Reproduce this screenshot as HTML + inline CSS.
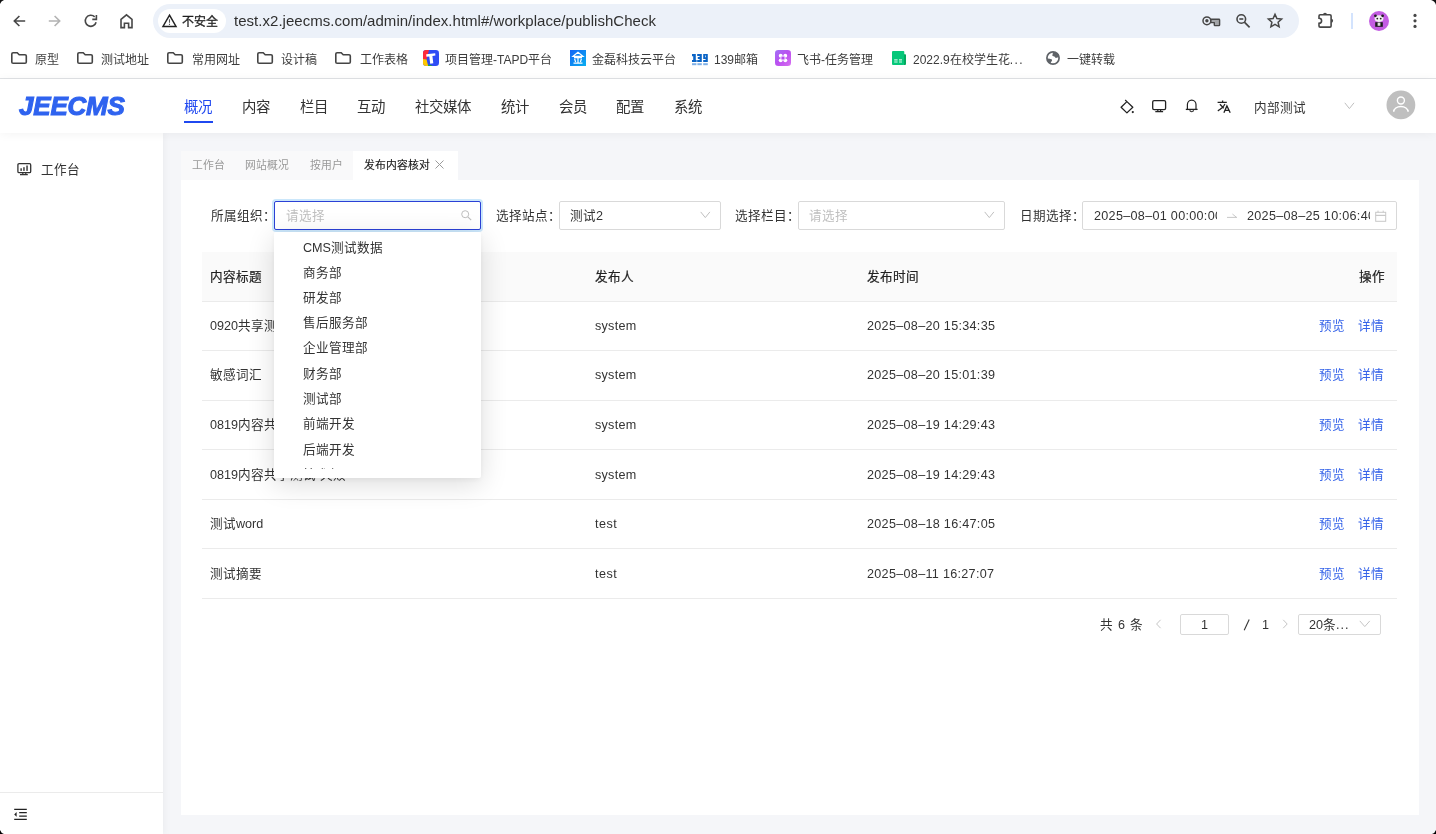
<!DOCTYPE html>
<html lang="zh-CN">
<head>
<meta charset="utf-8">
<style>
*{box-sizing:border-box;margin:0;padding:0}
html,body{width:1436px;height:834px;overflow:hidden;background:#fff;font-family:"Liberation Sans",sans-serif;color:#333}
.a{position:absolute;white-space:nowrap}
div{white-space:nowrap}
svg{position:absolute;overflow:visible}
#chrome{position:absolute;left:0;top:0;width:1436px;height:79px;background:#fff;border-bottom:1px solid #e1e3e6}
#pill{position:absolute;left:153px;top:4px;width:1146px;height:34px;border-radius:17px;background:#ecf1f9}
#chip{position:absolute;left:158px;top:9px;width:68px;height:24px;border-radius:12px;background:#fff}
.bm{position:absolute;top:50.5px;font-size:12px;line-height:18px;color:#3c3c3c}
#hdr{position:absolute;left:0;top:79px;width:1436px;height:54px;background:#fff;box-shadow:0 1px 10px rgba(0,0,0,0.05);z-index:3}
.nav{position:absolute;top:97px;font-size:14.4px;line-height:20px;color:#333;z-index:4}
#side{position:absolute;left:0;top:133px;width:163px;height:701px;background:#fff;z-index:2;box-shadow:1px 0 8px rgba(0,0,0,0.05)}
#main{position:absolute;left:163px;top:133px;width:1273px;height:701px;background:#f5f6f9}
.tab{position:absolute;top:151px;height:29px;font-size:10.8px;line-height:29px;color:#999}
#card{position:absolute;left:181px;top:180px;width:1238px;height:635px;background:#fff}
.lbl{position:absolute;top:208px;font-size:12.6px;line-height:16px;color:#333}
.sel{position:absolute;top:201px;height:29px;border:1px solid #d9d9d9;border-radius:2px;background:#fff}
.ph{color:#bfbfbf}
.th{position:absolute;top:268.5px;font-size:12.6px;line-height:16px;color:#222;-webkit-text-stroke:0.2px #222}
.td{position:absolute;font-size:12.6px;line-height:16px;color:#333}
.dt{letter-spacing:0.3px}
.rl{position:absolute;left:202px;width:1195px;height:1px;background:#ebebeb}
.lnk{position:absolute;font-size:12.6px;line-height:16px;color:#3563e9}
#dd{position:absolute;left:274px;top:232px;width:207px;height:246px;background:#fff;border-radius:2px;box-shadow:0 6px 28px rgba(0,0,0,0.14),0 2px 6px rgba(0,0,0,0.05);z-index:5;overflow:hidden}
.it{position:absolute;left:29px;font-size:12.6px;line-height:16px;color:#333}
body>div,body>svg{will-change:transform}
</style>
</head>
<body>
<!-- browser chrome -->
<div id="chrome">
  <svg style="left:0;top:0" width="6" height="6"><path d="M0 0H4Q1 1 0 4Z" fill="#111"/></svg>
  <svg style="left:1430px;top:0" width="6" height="6"><path d="M6 0H1Q5 1 6 5Z" fill="#111"/></svg>
  <!-- back -->
  <svg style="left:13px;top:15px" width="13" height="12"><path d="M12.2 6H1.6M6.4 1L1.3 6L6.4 11" fill="none" stroke="#474747" stroke-width="1.6"/></svg>
  <svg style="left:48px;top:15px" width="13" height="12"><path d="M0.8 6H11.4M6.6 1L11.7 6L6.6 11" fill="none" stroke="#b3b3b3" stroke-width="1.6"/></svg>
  <!-- reload -->
  <svg style="left:84px;top:14px" width="14" height="14"><path d="M10.69 2.91A5.5 5.5 0 1 0 12.11 8.22" fill="none" stroke="#474747" stroke-width="1.6"/><path d="M8.3 5.4H12.4V1.1" fill="none" stroke="#474747" stroke-width="1.6"/></svg>
  <!-- home -->
  <svg style="left:120px;top:14px" width="14" height="15"><path d="M1 13.6V5.4L6.5 0.9L12 5.4V13.6H8.6V9.2H4.4V13.6Z" fill="none" stroke="#474747" stroke-width="1.6" stroke-linejoin="miter"/></svg>
  <div id="pill"></div>
  <div id="chip"></div>
  <svg style="left:162px;top:14px" width="16" height="14"><path d="M7.5 1.2L14 12.5H1Z" fill="none" stroke="#222" stroke-width="1.5" stroke-linejoin="miter"/><path d="M7.5 5.2V8.8M7.5 9.8V11" stroke="#555" stroke-width="1.1"/></svg>
  <div class="a" style="left:182px;top:13px;font-size:12px;line-height:18px;color:#1f1f1f;-webkit-text-stroke:0.3px #1f1f1f">不安全</div>
  <div class="a" style="left:234px;top:11px;font-size:15px;line-height:20px;color:#303030;letter-spacing:0.03px">test.x2.jeecms.com/admin/index.html#/workplace/publishCheck</div>
  <!-- key -->
  <svg style="left:1202px;top:16px" width="19" height="11"><path d="M8.6 3.3H16.9Q17.6 3.3 17.6 4V8.9Q17.6 9.6 16.9 9.6H13Q12.3 9.6 12.3 8.9V6.6H8.6Z" fill="#a3a5a8" stroke="#474747" stroke-width="1.4" stroke-linejoin="round"/><circle cx="4.9" cy="4.8" r="3.9" fill="#ecf1f9" stroke="#474747" stroke-width="1.5"/><circle cx="4.9" cy="4.8" r="1.7" fill="#474747"/></svg>
  <!-- zoom -->
  <svg style="left:1236px;top:14px" width="15" height="15"><circle cx="5.3" cy="5" r="4.3" fill="none" stroke="#474747" stroke-width="1.6"/><path d="M3.3 5H7.3" stroke="#474747" stroke-width="1.6"/><path d="M8.4 8.1L13.6 13.4" stroke="#474747" stroke-width="1.7"/></svg>
  <!-- star -->
  <svg style="left:1267px;top:13px" width="16" height="16"><path d="M8 1.3L9.9 5.6L14.6 6.1L11.1 9.2L12.1 13.8L8 11.4L3.9 13.8L4.9 9.2L1.4 6.1L6.1 5.6Z" fill="none" stroke="#474747" stroke-width="1.5" stroke-linejoin="miter"/></svg>
  <!-- puzzle -->
  <svg style="left:1317px;top:11px" width="18" height="18"><path d="M3.2 3.8H12.9Q14.1 3.8 14.1 5V14.9Q14.1 16.1 12.9 16.1H3.2Q2 16.1 2 14.9V12.4A2.6 2.6 0 0 0 2 7.2V5Q2 3.8 3.2 3.8Z" fill="none" stroke="#474747" stroke-width="1.6"/><path d="M6 3.8A2 2 0 0 1 10 3.8Z" fill="#474747"/><path d="M14.1 7.8A2 2 0 0 1 14.1 11.8Z" fill="#474747"/></svg>
  <div class="a" style="left:1351px;top:13px;width:2px;height:16px;background:#d3e3fd"></div>
  <!-- profile -->
  <svg style="left:1369px;top:11px" width="20" height="20"><circle cx="10" cy="10" r="10" fill="#c35de2"/><ellipse cx="10" cy="7.6" rx="4.4" ry="3.3" fill="#f2f2f2"/><circle cx="6.4" cy="4.8" r="1.4" fill="#222"/><circle cx="13.6" cy="4.8" r="1.4" fill="#222"/><circle cx="8.3" cy="7.6" r="0.9" fill="#222"/><circle cx="11.7" cy="7.6" r="0.9" fill="#222"/><path d="M6.2 11.2H13.8V15.8H6.2Z" fill="#1a1a1a"/><path d="M8.6 11.6H11.4V14.8H8.6Z" fill="#ddd"/></svg>
  <!-- menu -->
  <svg style="left:1413px;top:13px" width="4" height="16"><circle cx="2" cy="2.4" r="1.6" fill="#474747"/><circle cx="2" cy="7.8" r="1.6" fill="#474747"/><circle cx="2" cy="13.4" r="1.6" fill="#474747"/></svg>

  <!-- bookmarks -->
  <svg style="left:11px;top:52px" width="17" height="12"><path d="M0.8 2.1Q0.8 0.8 2.1 0.8H6.2L8.2 2.8H14Q15.3 2.8 15.3 4.1V9.9Q15.3 11.2 14 11.2H2.1Q0.8 11.2 0.8 9.9Z" fill="none" stroke="#444" stroke-width="1.6"/></svg>
  <div class="bm" style="left:35px">原型</div>
  <svg style="left:77px;top:52px" width="17" height="12"><path d="M0.8 2.1Q0.8 0.8 2.1 0.8H6.2L8.2 2.8H14Q15.3 2.8 15.3 4.1V9.9Q15.3 11.2 14 11.2H2.1Q0.8 11.2 0.8 9.9Z" fill="none" stroke="#444" stroke-width="1.6"/></svg>
  <div class="bm" style="left:101px">测试地址</div>
  <svg style="left:167px;top:52px" width="17" height="12"><path d="M0.8 2.1Q0.8 0.8 2.1 0.8H6.2L8.2 2.8H14Q15.3 2.8 15.3 4.1V9.9Q15.3 11.2 14 11.2H2.1Q0.8 11.2 0.8 9.9Z" fill="none" stroke="#444" stroke-width="1.6"/></svg>
  <div class="bm" style="left:192px">常用网址</div>
  <svg style="left:257px;top:52px" width="17" height="12"><path d="M0.8 2.1Q0.8 0.8 2.1 0.8H6.2L8.2 2.8H14Q15.3 2.8 15.3 4.1V9.9Q15.3 11.2 14 11.2H2.1Q0.8 11.2 0.8 9.9Z" fill="none" stroke="#444" stroke-width="1.6"/></svg>
  <div class="bm" style="left:281px">设计稿</div>
  <svg style="left:335px;top:52px" width="17" height="12"><path d="M0.8 2.1Q0.8 0.8 2.1 0.8H6.2L8.2 2.8H14Q15.3 2.8 15.3 4.1V9.9Q15.3 11.2 14 11.2H2.1Q0.8 11.2 0.8 9.9Z" fill="none" stroke="#444" stroke-width="1.6"/></svg>
  <div class="bm" style="left:360px">工作表格</div>
  <svg style="left:423px;top:50px" width="16" height="16"><defs><clipPath id="tp"><rect x="0" y="0" width="16" height="16" rx="3.2"/></clipPath></defs><g clip-path="url(#tp)"><rect width="16" height="16" fill="#2f4df5"/><path d="M0 0H6L3.6 9.6L0 9Z" fill="#ff2a3a"/><path d="M0 9L3.6 9.6L5.2 16H0Z" fill="#ffc800"/><path d="M5 16L5.2 14.6L9 15.6V16Z" fill="#1eaa3c"/></g><path d="M3.2 4.2L12.2 3.2L12.4 5.6L9.4 6L10.3 13.3L7.2 13.8L6.3 6.4L3.4 6.8Z" fill="#fff"/></svg>
  <div class="bm" style="left:445px">项目管理-TAPD平台</div>
  <svg style="left:570px;top:50px" width="16" height="16"><defs><linearGradient id="jg" x1="0" y1="0" x2="1" y2="1"><stop offset="0" stop-color="#1565f5"/><stop offset="1" stop-color="#07aef0"/></linearGradient></defs><rect width="16" height="16" fill="url(#jg)"/><path d="M8 2.3L3 6.3H13Z" fill="none" stroke="#fff" stroke-width="1.2"/><path d="M4 7.6H12M8 6.4V13M4.6 8.8L5.6 12M11.4 8.8L10.4 12M3.5 13.2H12.5" stroke="#fff" stroke-width="1.2" fill="none"/></svg>
  <div class="bm" style="left:592px">金磊科技云平台</div>
  <svg style="left:691.5px;top:53.8px" width="17" height="13"><g fill="#0a64c6"><path d="M0 0H3.8V6H4.6V8H0V6H1.2V2.2H0Z"/><path d="M5.2 0H9.8V8H5.2V6H7.6V5H5.8V3H7.6V2H5.2Z"/><path d="M11.2 0H15.8V8H11.2V6H13.6V5H11.2ZM13.2 1.6V3.2H13.9V1.6Z"/></g><g fill="#7fb0e6"><rect x="0" y="9.2" width="4.4" height="2"/><rect x="5.4" y="9.2" width="4.4" height="2"/><rect x="11.2" y="9.2" width="4.6" height="2"/></g></svg>
  <div class="bm" style="left:714px">139邮箱</div>
  <svg style="left:775px;top:50px" width="16" height="16"><defs><linearGradient id="fg" x1="0" y1="0" x2="1" y2="1"><stop offset="0" stop-color="#a070f6"/><stop offset="0.5" stop-color="#bb4ff0"/><stop offset="1" stop-color="#d870f0"/></linearGradient></defs><rect width="16" height="16" rx="3.3" fill="url(#fg)"/><circle cx="5.7" cy="5.7" r="1.9" fill="#fff"/><circle cx="10.3" cy="5.7" r="1.9" fill="#fff"/><circle cx="5.7" cy="10.3" r="1.9" fill="#fff"/><circle cx="10.3" cy="10.3" r="1.9" fill="#fff"/><circle cx="8" cy="8" r="2.6" fill="#e9c8fb"/><circle cx="8" cy="8" r="1.6" fill="#b54cf0"/></svg>
  <div class="bm" style="left:797px">飞书-任务管理</div>
  <svg style="left:892px;top:51px" width="15" height="15"><rect x="0" y="0" width="12.3" height="14" rx="1" fill="#06c77a"/><path d="M12 3.2H13.2Q14 3.2 14 4V13Q14 14 13 14H12Z" fill="#03a95f"/><rect x="2.2" y="8.4" width="3.4" height="1" fill="#fff"/><rect x="7" y="8.4" width="3" height="1" fill="#fff"/><rect x="2.2" y="10.5" width="3.4" height="1" fill="#cfffe8"/><rect x="7" y="10.5" width="3" height="1" fill="#cfffe8"/></svg>
  <div class="bm" style="left:913px">2022.9在校学生花<span style="letter-spacing:1.4px">...</span></div>
  <svg style="left:1046px;top:51px" width="14" height="14"><circle cx="7" cy="7" r="6.1" fill="none" stroke="#5f6368" stroke-width="1.7"/><path d="M7.2 0.9Q6.2 3.5 6.4 4.9Q8.4 4.7 9.8 7.1Q11.5 6.5 13.1 6.1L13 4Q11.5 1.5 7.2 0.9Z" fill="#5f6368"/><path d="M0.9 7.5Q3.5 7.4 6 8.4Q6.4 10.2 5 11.1Q4.6 12.2 4.6 13Q1.8 11.5 0.9 7.5Z" fill="#5f6368"/></svg>
  <div class="bm" style="left:1067px">一键转载</div>
</div>
<!-- app header -->
<div id="hdr">
  <div class="a" style="left:19px;top:12px;font-size:26px;line-height:30px;font-weight:bold;font-style:italic;color:#2f63ef;-webkit-text-stroke:1.1px #2f63ef;letter-spacing:-0.2px">JEECMS</div>
</div>
<div class="nav" style="left:184px;color:#1f48f0">概况</div>
<div class="a" style="left:184px;top:121px;width:29px;height:2px;background:#1f48f0;z-index:4"></div>
<div class="nav" style="left:242px">内容</div>
<div class="nav" style="left:300px">栏目</div>
<div class="nav" style="left:357px">互动</div>
<div class="nav" style="left:415px">社交媒体</div>
<div class="nav" style="left:501px">统计</div>
<div class="nav" style="left:559px">会员</div>
<div class="nav" style="left:616px">配置</div>
<div class="nav" style="left:674px">系统</div>
<!-- header right icons -->
<svg style="left:1120px;top:98.5px;z-index:4" width="15" height="15"><path d="M1.1 8.3L6.9 2.6L12.8 8.3L6.9 13.9Z" fill="none" stroke="#222" stroke-width="1.3" stroke-linejoin="round"/><path d="M5.2 1L6.9 2.6" stroke="#222" stroke-width="1.3"/><circle cx="12.8" cy="13.1" r="1.1" fill="#222"/></svg>
<svg style="left:1152px;top:100px;z-index:4" width="15" height="13"><rect x="0.7" y="0.6" width="12.9" height="9" rx="1.4" fill="none" stroke="#222" stroke-width="1.3"/><path d="M5.8 9.6V11.4M8.6 9.6V11.4M3.3 11.7H11.1" stroke="#222" stroke-width="1.2"/></svg>
<svg style="left:1185px;top:99px;z-index:4" width="15" height="15"><path d="M2.4 10.4V5.6A4.3 4.5 0 0 1 11 5.6V10.4" fill="none" stroke="#222" stroke-width="1.2"/><path d="M0.8 10.4H12.6" stroke="#222" stroke-width="1.3"/><path d="M4.9 10.9A1.8 1.8 0 0 0 8.5 10.9" fill="none" stroke="#444" stroke-width="1.2"/></svg>
<svg style="left:1217px;top:99.5px;z-index:4" width="15" height="14"><path d="M0.6 2.3H9.8M5.6 0.5V2.3M2.9 4.3L6.8 8.3M7.9 4.1Q6 8.3 0.8 10.8" fill="none" stroke="#222" stroke-width="1.3"/><path d="M6.9 12.8L9.9 5.9L13.2 12.8M7.9 10.4H12.1" fill="none" stroke="#222" stroke-width="1.3"/></svg>
<div class="a" style="left:1254px;top:99.5px;font-size:12.6px;line-height:16px;color:#333;z-index:4">内部测试</div>
<svg style="left:1344px;top:102px;z-index:4" width="11" height="8"><path d="M0.8 0.8L5.4 6.6L10 0.8" fill="none" stroke="#bfbfbf" stroke-width="1"/></svg>
<svg style="left:1386px;top:90px;z-index:4" width="30" height="30"><circle cx="14.9" cy="14.9" r="14.4" fill="#bfbfbf"/><circle cx="14.9" cy="10.5" r="3.5" fill="none" stroke="#fff" stroke-width="1.4"/><path d="M7.7 21.8A7.2 5.4 0 0 1 22.1 21.8" fill="none" stroke="#fff" stroke-width="1.5"/></svg>

<!-- sidebar -->
<div id="side">
  <svg style="left:17px;top:30px" width="15" height="14"><rect x="0.9" y="0.7" width="12.8" height="9" rx="1.2" fill="none" stroke="#333" stroke-width="1.3"/><rect x="3.3" y="5.3" width="1.7" height="2.6" fill="#555"/><rect x="6.1" y="4.2" width="1.7" height="3.7" fill="#555"/><rect x="9.2" y="2.5" width="1.7" height="5.4" fill="#555"/><path d="M5.8 9.7V11.4M8.8 9.7V11.4M3 11.6H10.8" stroke="#333" stroke-width="1.2"/></svg>
  <div class="a" style="left:41px;top:29px;font-size:12.6px;line-height:16px;color:#333">工作台</div>
  <div class="a" style="left:0;top:659px;width:163px;height:1px;background:#ebebeb"></div>
  <svg style="left:14px;top:675px" width="14" height="13"><path d="M0.2 1.4H12.8M5.2 4.6H12.8M5.2 8.1H12.8M0.2 11.4H12.8" stroke="#222" stroke-width="1.3"/><path d="M0.2 6.4L2.6 4V8.8Z" fill="#222"/></svg>
</div>
<!-- main -->
<div id="main"></div>
<div class="a" style="left:181px;top:151px;width:172px;height:29px;background:#f9f9fa"></div>
<div class="a" style="left:353px;top:151px;width:105px;height:29px;background:#fff"></div>
<div class="tab" style="left:192px">工作台</div>
<div class="tab" style="left:245px">网站概况</div>
<div class="tab" style="left:310px">按用户</div>
<div class="tab" style="left:364px;color:#1a1a1a;-webkit-text-stroke:0.15px #1a1a1a">发布内容核对</div>
<svg style="left:435px;top:160px" width="9" height="9"><path d="M0.5 0.5L8.5 8.5M8.5 0.5L0.5 8.5" stroke="#9a9a9a" stroke-width="1"/></svg>
<div id="card"></div>

<!-- filters -->
<div class="lbl" style="left:211px">所属组织：</div>
<div class="sel" style="left:274px;width:207px;border-color:#2b41d6;box-shadow:0 0 0 2px #cbe7fb"></div>
<div class="lbl ph" style="left:285.5px">请选择</div>
<svg style="left:461px;top:210px" width="11" height="11"><circle cx="4.2" cy="4.2" r="3.5" fill="none" stroke="#bdbdbd" stroke-width="1"/><path d="M6.8 6.8L10.2 10.2" stroke="#bdbdbd" stroke-width="1.1"/></svg>
<div class="lbl" style="left:496px">选择站点：</div>
<div class="sel" style="left:559px;width:162px"></div>
<div class="lbl" style="left:570px">测试2</div>
<svg style="left:700px;top:211px" width="11" height="8"><path d="M0.7 0.9L5.3 6.6L9.9 0.9" fill="none" stroke="#bfbfbf" stroke-width="1"/></svg>
<div class="lbl" style="left:735px">选择栏目：</div>
<div class="sel" style="left:798px;width:207px"></div>
<div class="lbl ph" style="left:809px">请选择</div>
<svg style="left:984px;top:211px" width="11" height="8"><path d="M0.7 0.9L5.3 6.6L9.9 0.9" fill="none" stroke="#bfbfbf" stroke-width="1"/></svg>
<div class="lbl" style="left:1020px">日期选择：</div>
<div class="sel" style="left:1082px;width:315px"></div>
<div class="lbl dt" style="left:1094px;width:123px;overflow:hidden">2025–08–01 00:00:00</div>
<svg style="left:1226px;top:213px" width="12" height="6"><path d="M1 4.4H11M6.4 1L10.6 4.4" fill="none" stroke="#c8c8c8" stroke-width="1"/></svg>
<div class="lbl dt" style="left:1247px;width:123px;overflow:hidden">2025–08–25 10:06:40</div>
<svg style="left:1375px;top:210px" width="12" height="12"><rect x="0.7" y="2.3" width="10" height="9" fill="none" stroke="#c8c8c8" stroke-width="1"/><path d="M0.7 5.4H10.7" stroke="#c8c8c8" stroke-width="1.2"/><path d="M3 0.6V2.4M8.2 0.6V2.4" stroke="#c8c8c8" stroke-width="1"/></svg>

<!-- table -->
<div class="a" style="left:202px;top:252px;width:1195px;height:49px;background:#fafafa"></div>
<div class="rl" style="top:301px"></div>
<div class="rl" style="top:350px"></div>
<div class="rl" style="top:400px"></div>
<div class="rl" style="top:449px"></div>
<div class="rl" style="top:499px"></div>
<div class="rl" style="top:548px"></div>
<div class="rl" style="top:598px"></div>
<div class="th" style="left:210px">内容标题</div>
<div class="th" style="left:595px">发布人</div>
<div class="th" style="left:867px">发布时间</div>
<div class="th" style="left:1359px">操作</div>

<div class="td" style="left:210px;top:318px">0920共享测试</div>
<div class="td" style="left:595px;top:318px;letter-spacing:0.25px">system</div>
<div class="td dt" style="left:867px;top:318px">2025–08–20 15:34:35</div>
<div class="lnk" style="left:1319px;top:318px">预览</div>
<div class="lnk" style="left:1358px;top:318px">详情</div>

<div class="td" style="left:210px;top:367px">敏感词汇</div>
<div class="td" style="left:595px;top:367px;letter-spacing:0.25px">system</div>
<div class="td dt" style="left:867px;top:367px">2025–08–20 15:01:39</div>
<div class="lnk" style="left:1319px;top:367px">预览</div>
<div class="lnk" style="left:1358px;top:367px">详情</div>

<div class="td" style="left:210px;top:417px">0819内容共享测试-成功</div>
<div class="td" style="left:595px;top:417px;letter-spacing:0.25px">system</div>
<div class="td dt" style="left:867px;top:417px">2025–08–19 14:29:43</div>
<div class="lnk" style="left:1319px;top:417px">预览</div>
<div class="lnk" style="left:1358px;top:417px">详情</div>

<div class="td" style="left:210px;top:467px">0819内容共享测试-失败</div>
<div class="td" style="left:595px;top:467px;letter-spacing:0.25px">system</div>
<div class="td dt" style="left:867px;top:467px">2025–08–19 14:29:43</div>
<div class="lnk" style="left:1319px;top:467px">预览</div>
<div class="lnk" style="left:1358px;top:467px">详情</div>

<div class="td" style="left:210px;top:516px">测试word</div>
<div class="td" style="left:595px;top:516px;letter-spacing:0.5px">test</div>
<div class="td dt" style="left:867px;top:516px">2025–08–18 16:47:05</div>
<div class="lnk" style="left:1319px;top:516px">预览</div>
<div class="lnk" style="left:1358px;top:516px">详情</div>

<div class="td" style="left:210px;top:566px">测试摘要</div>
<div class="td" style="left:595px;top:566px;letter-spacing:0.5px">test</div>
<div class="td dt" style="left:867px;top:566px">2025–08–11 16:27:07</div>
<div class="lnk" style="left:1319px;top:566px">预览</div>
<div class="lnk" style="left:1358px;top:566px">详情</div>

<!-- pagination -->
<div class="td" style="left:1100px;top:617px;word-spacing:1.6px">共 6 条</div>
<svg style="left:1155px;top:619px" width="7" height="10"><path d="M5.6 0.8L1.6 5L5.6 9.2" fill="none" stroke="#c4c4c4" stroke-width="1"/></svg>
<div class="a" style="left:1180px;top:614px;width:49px;height:21px;border:1px solid #d9d9d9;border-radius:2px"></div>
<div class="td" style="left:1201px;top:617px">1</div>
<svg style="left:1243px;top:618px" width="8" height="14"><path d="M1.2 12.2L6.2 1.6" stroke="#333" stroke-width="1.1"/></svg>
<div class="td" style="left:1262px;top:617px">1</div>
<svg style="left:1282px;top:619px" width="7" height="10"><path d="M1.2 0.8L5.2 5L1.2 9.2" fill="none" stroke="#c4c4c4" stroke-width="1"/></svg>
<div class="a" style="left:1298px;top:614px;width:83px;height:21px;border:1px solid #d9d9d9;border-radius:2px"></div>
<div class="td" style="left:1309px;top:617px">20条<span style="letter-spacing:1px">...</span></div>
<svg style="left:1359px;top:620px" width="12" height="8"><path d="M0.8 0.9L5.8 6.6L10.8 0.9" fill="none" stroke="#c4c4c4" stroke-width="1"/></svg>

<!-- dropdown -->
<div id="dd">
  <div class="it" style="top:8px">CMS测试数据</div>
  <div class="it" style="top:33px">商务部</div>
  <div class="it" style="top:58px">研发部</div>
  <div class="it" style="top:83px">售后服务部</div>
  <div class="it" style="top:108px">企业管理部</div>
  <div class="it" style="top:134px">财务部</div>
  <div class="it" style="top:159px">测试部</div>
  <div class="it" style="top:184px">前端开发</div>
  <div class="it" style="top:210px">后端开发</div>
  <div style="position:absolute;left:0;top:0;width:207px;height:237px;overflow:hidden">
    <div class="it" style="top:235px">技术部</div>
  </div>
</div>
<svg style="left:0;top:830px;z-index:9" width="5" height="4"><path d="M0 0Q1 3 4 4H0Z" fill="#000"/></svg>
<svg style="left:1431px;top:830px;z-index:9" width="5" height="4"><path d="M5 0Q4 3 1 4H5Z" fill="#000"/></svg>
</body>
</html>
